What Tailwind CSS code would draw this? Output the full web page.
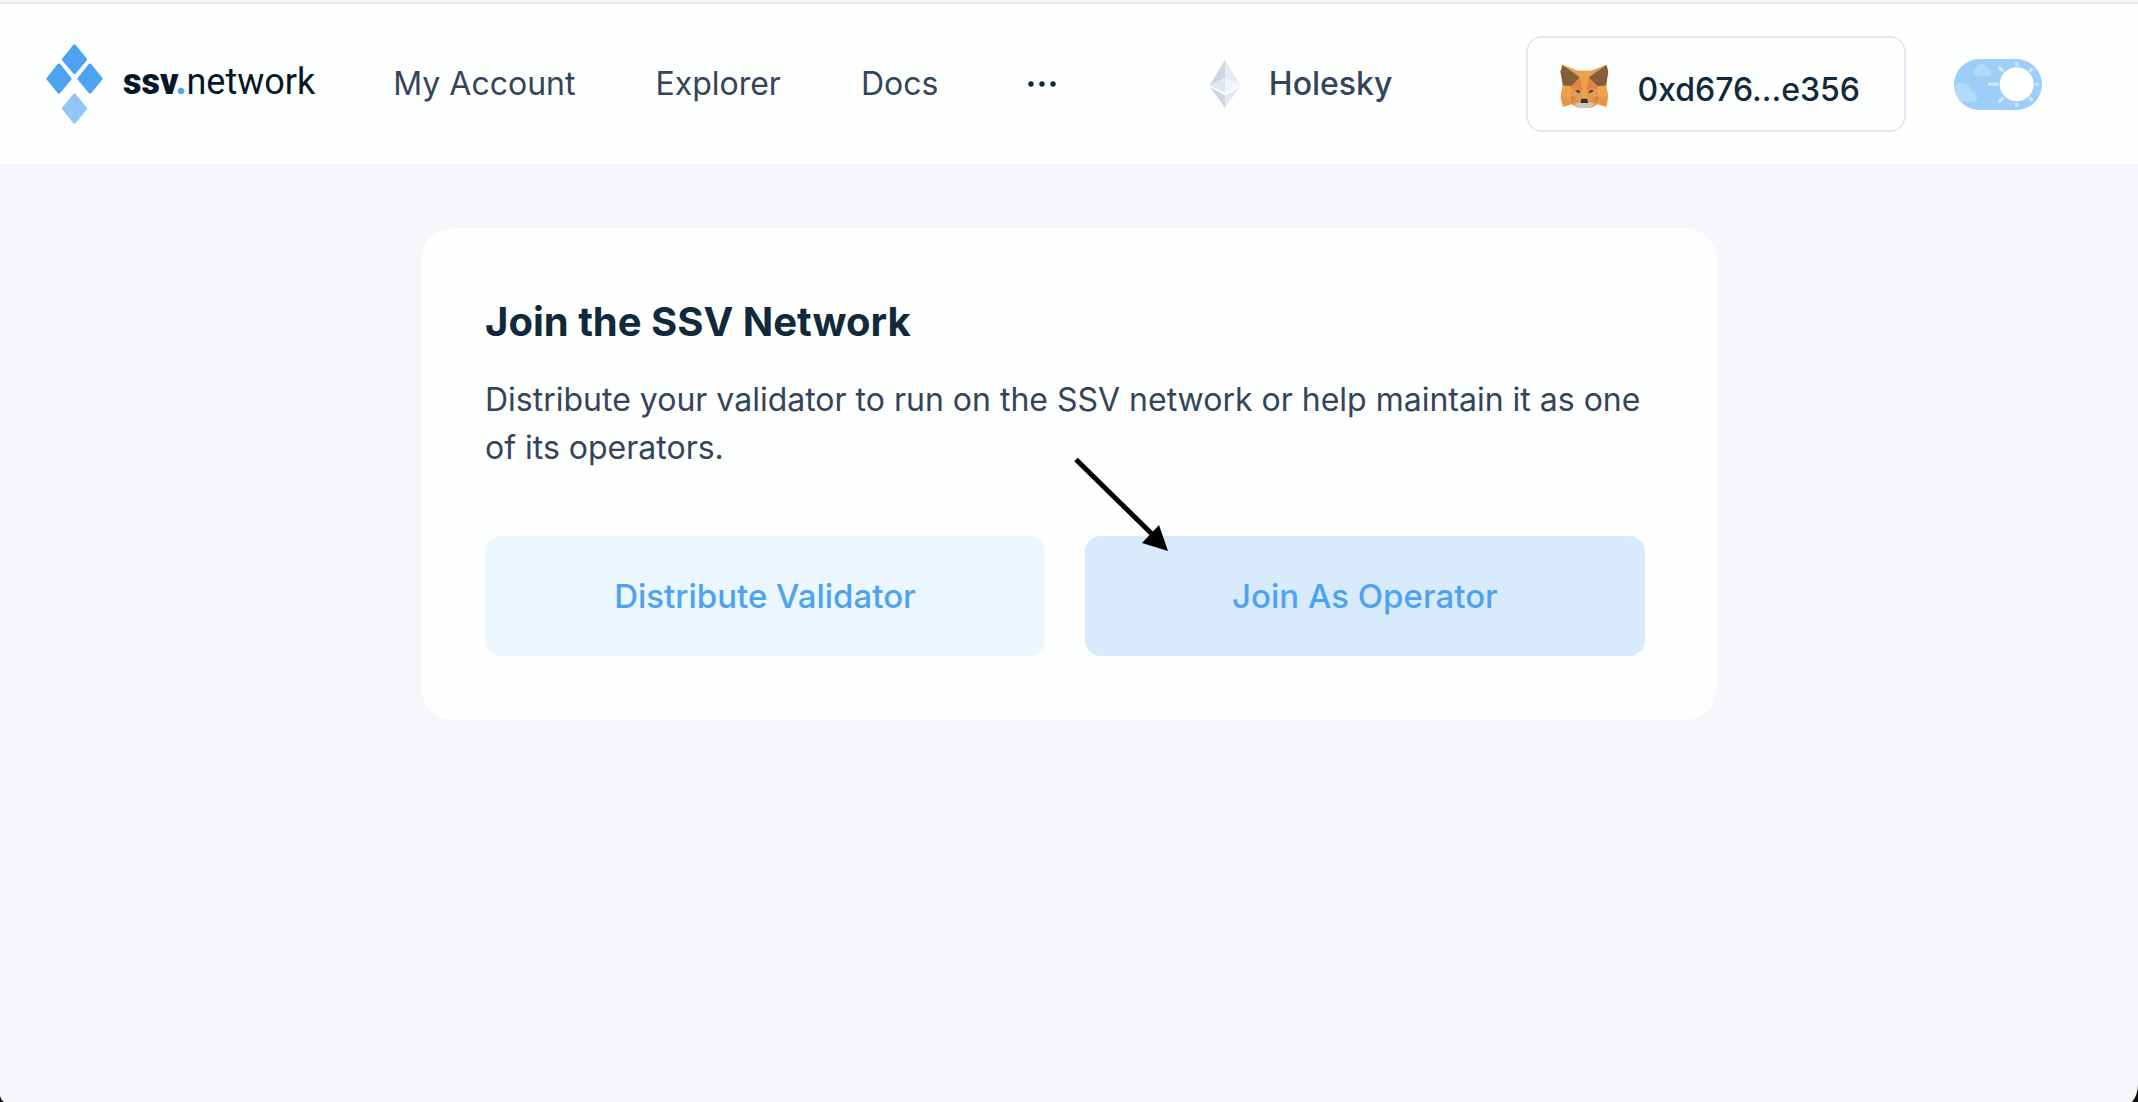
<!DOCTYPE html>
<html lang="en">
<head>
<meta charset="utf-8">
<meta name="viewport" content="width=device-width, initial-scale=1">
<title>SSV Network</title>
<script src="https://cdn.jsdelivr.net/npm/@tailwindcss/browser@4"></script>
</head>
<body class="relative flex min-h-screen flex-col bg-[#f5f7fb] font-['Inter',sans-serif] text-[32px] leading-12 text-[#34455a]">
  <div class="h-1 border-b-2 border-[#ebecf0] bg-[#f4f5f7]"></div>
  <header class="flex h-40 items-center bg-[#fdfefe] pr-24 pl-[46px]">
    <a href="#" class="flex items-center gap-5" aria-label="ssv.network">
      <svg class="h-20 w-[57px]" viewBox="137 131 172 242" aria-hidden="true">
        <g fill="#4ea3f1" stroke="#4ea3f1" stroke-width="10" stroke-linejoin="round">
          <path d="M223 137l33 41-33 39-33-39z"/>
          <path d="M176 195l33 41-33 40-33-40z"/>
          <path d="M270 195l33 41-33 40-33-40z"/>
        </g>
        <path d="M223 286l33 40-33 41-33-41z" fill="#93c5f7" stroke="#93c5f7" stroke-width="10" stroke-linejoin="round"/>
      </svg>
      <span class="mb-1 font-['Roboto',sans-serif] text-[36px] leading-12 text-[#061727]"><span class="font-black">ssv</span><span class="font-black text-[#4ea3f1]">.</span><span>network</span></span>
    </a>
    <nav class="ml-[78px] flex items-center gap-20">
      <a href="#">My Account</a>
      <a href="#">Explorer</a>
      <a href="#">Docs</a>
      <button type="button" class="ml-2 flex h-12 items-center" aria-label="More">
        <svg class="h-2 w-8" viewBox="0 0 32 8" fill="#0b2a3c" aria-hidden="true"><circle cx="5" cy="4" r="2.7"/><circle cx="16" cy="4" r="2.7"/><circle cx="27" cy="4" r="2.7"/></svg>
      </button>
    </nav>
    <div class="ml-auto flex items-center gap-12">
      <button type="button" class="mr-[86px] flex items-center gap-7 font-medium">
        <svg class="h-12 w-8" viewBox="90 119 96 146" aria-hidden="true">
          <path d="M138 119L92 195l46-22z" fill="#cfd4e4"/>
          <path d="M138 119l46 76-46-22z" fill="#e6e8f5"/>
          <path d="M92 195l46-22v46z" fill="#e2e5f2"/>
          <path d="M184 195l-46-22v46z" fill="#f2f3fb"/>
          <path d="M92 200l46 27v38z" fill="#cfd4e4"/>
          <path d="M184 200l-46 27v38z" fill="#e6e8f5"/>
        </svg>
        Holesky
      </button>
      <button type="button" class="flex h-24 items-center gap-7 rounded-2xl border-2 border-[#e6e6f7] pr-11 pl-8 font-medium text-[#11293b]">
        <svg class="mt-1 h-11 w-[49px]" viewBox="36 42 146 132" aria-hidden="true">
          <path d="M43 45L88 62h42l45-17 5 20-6 41 6 32-5 33-27-8-18 10H90l-20-10-26 8-7-31 7-34-7-44z" fill="#e5984b"/>
          <path d="M88 62h42l-12 60-2 26h-14l-2-26z" fill="#eda14c"/>
          <path d="M43 45l45 17 8 20zM175 45l-45 17-8 20z" fill="#e2a05f"/>
          <path d="M43 45l-6 20 7 41 26 3 25-27zM175 45l5 20-6 41-26 3-26-27z" fill="#865d3b"/>
          <path d="M44 107l26 2-6 29H38zM174 107l-26 2 6 29h26z" fill="#eda14c"/>
          <path d="M95 82l-26 33 35 7zM122 82l27 33-35 7z" fill="#df8741"/>
          <path d="M64 138l14 0-8 25zM154 138h-14l8 25z" fill="#d57c38"/>
          <path d="M78 138l12 17-20 8zM140 138l-12 17 20 8z" fill="#e18c43"/>
          <path d="M38 138h42l4-24M180 138h-42l-4-24M64 138l6 25M154 138l-6 25M69 115l-5 23M149 115l5 23" fill="none" stroke="#f2b879" stroke-width="1.5"/>
          <path d="M78 161l20-6h22l20 6-14 12H92z" fill="#d3c4b8"/>
          <path d="M80 121l12-1 6 9-12-2zM138 121l-12-1-6 9 12-2z" fill="#3c4652"/>
          <path d="M100 146h17l3 13H97z" fill="#333"/>
        </svg>
        <span class="mt-3">0xd676...e356</span>
      </button>
      <label class="block cursor-pointer rounded-full">
        <input type="checkbox" role="switch" class="sr-only" aria-label="Dark mode">
        <svg class="h-[51px] w-22" viewBox="72 57 264 153" aria-hidden="true">
          <rect x="72" y="57" width="264" height="153" rx="76.5" fill="#9ccef8"/>
          <path d="M139 108a11 11 0 0 1 0-21 16 16 0 0 1 31-3 12 12 0 1 1 0 24zM91 185Q78 170 74 140a27 27 0 0 1 49 13 16 16 0 1 1 5 32z" fill="#b3daf9"/>
          <g stroke="#cfe7fb" stroke-width="9">
            <path d="M174 133h30M314 133h13M260 66v12M260 189v12M206 80l14 14M206 187l14-14M298 95l10-10M298 172l10 10"/>
          </g>
          <circle cx="260" cy="133" r="51" fill="#fff"/>
        </svg>
      </label>
    </div>
  </header>
  <main class="mx-auto w-full max-w-[1296px] pt-16">
    <section class="rounded-[32px] bg-[#fdfefe] py-16 pr-18 pl-16">
      <h1 class="mt-0.5 text-[40px] leading-14 font-bold text-[#11293b]">Join the SSV Network</h1>
      <p class="mt-[26px]">Distribute your validator to run on the SSV network or help maintain it as one of its operators.</p>
      <div class="relative mt-16 grid grid-cols-2 gap-10 text-[33px] font-medium text-[#4ea3f1]">
        <button type="button" class="h-30 rounded-2xl bg-[#ebf6fe]">Distribute Validator</button>
        <button type="button" class="h-30 rounded-2xl bg-[#d7ebfc]">Join As Operator</button>
        <!-- Pointer towards the operator button -->
        <svg class="pointer-events-none absolute -top-20 left-1/2 ml-2 h-24 w-28" viewBox="1074 456 112 96" aria-hidden="true">
          <path d="M1077 459.500L1156 537" stroke="#000" stroke-width="5"/>
          <path d="M1169 551l-9-26-17 18z"/>
        </svg>
      </div>
    </section>
  </main>
  <!-- Rounded window corners -->
  <svg class="absolute bottom-0 left-0 h-5 w-2" viewBox="0 0 8 20" aria-hidden="true"><path d="M0 14q1 4 4 6H0z" fill="#111"/></svg>
  <svg class="absolute right-0 bottom-0 h-5 w-2" viewBox="0 0 8 20" aria-hidden="true"><path d="M8 2q0 11-6 18h6z" fill="#111"/></svg>
</body>
</html>
